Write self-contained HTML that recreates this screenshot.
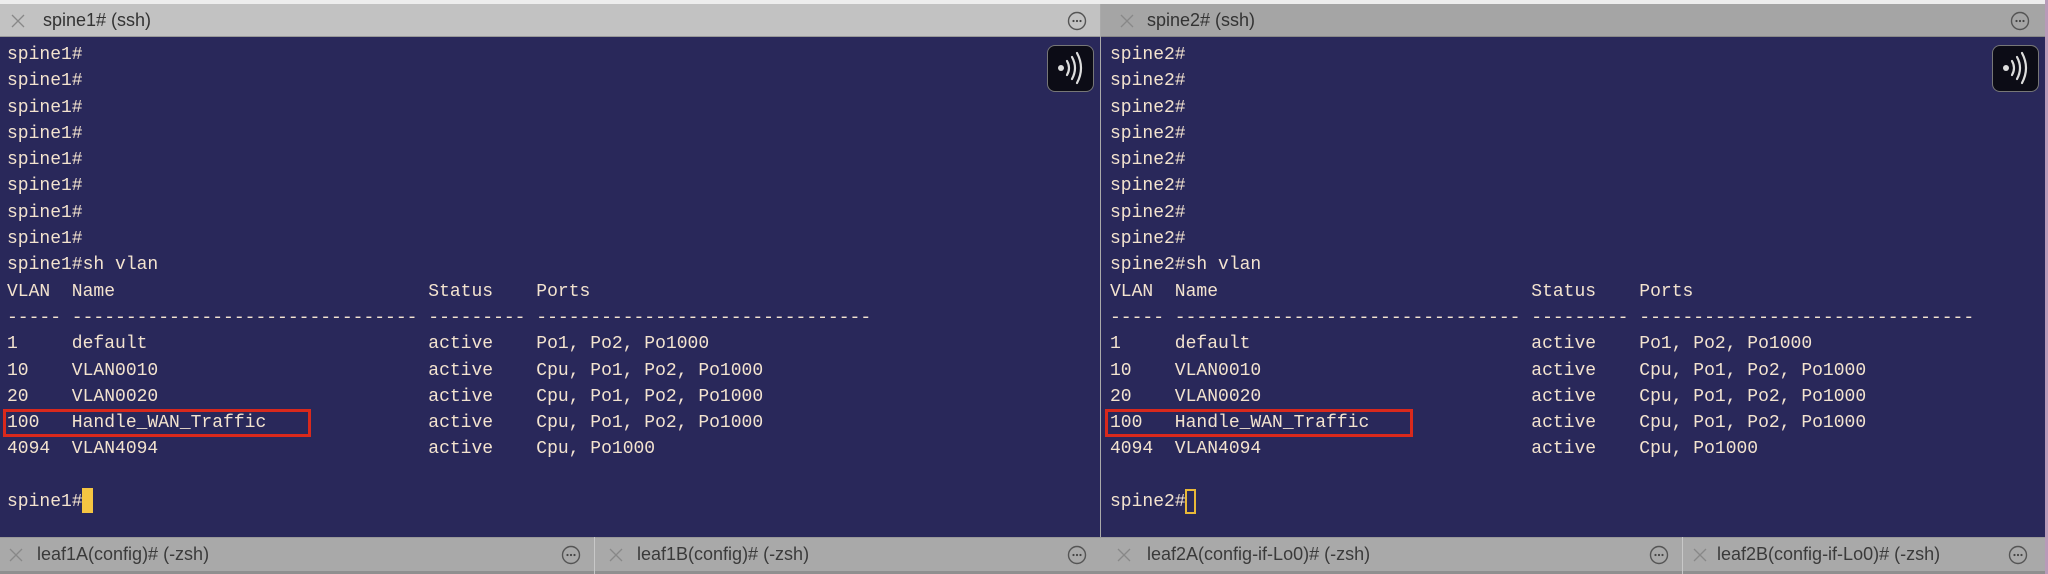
<!DOCTYPE html>
<html><head><meta charset="utf-8"><style>
*{margin:0;padding:0;box-sizing:border-box}
body{width:2048px;height:574px;overflow:hidden;background:#29285a;position:relative;font-family:"Liberation Sans",sans-serif}
.abs{position:absolute}
.term{position:absolute;top:42px;font-family:"Liberation Mono",monospace;font-size:18px;line-height:26.3px;color:#f3e3cf;white-space:pre}
.tab{position:absolute;height:33px;font-size:18px;color:#333;line-height:33px}
.x{position:absolute;width:16px;height:16px}
.dots{position:absolute;width:20px;height:20px}
.red{position:absolute;border:3px solid #d9291c;width:308px;height:28px;top:409px}
.ico{position:absolute;top:45px;width:47px;height:47px;background:#0c0c16;border:1.5px solid #777;border-radius:8px}
</style></head><body>
<svg width="0" height="0" style="position:absolute"><defs>
<symbol id="d" viewBox="0 0 20 20"><circle cx="10" cy="10" r="8.5" fill="none" stroke="#555" stroke-width="1.4"/><circle cx="6.5" cy="10" r="1.1" fill="#444"/><circle cx="10" cy="10" r="1.1" fill="#444"/><circle cx="13.5" cy="10" r="1.1" fill="#444"/></symbol>
<symbol id="c" viewBox="0 0 16 16"><path d="M2 2L14 14M14 2L2 14" stroke="#888" stroke-width="1.3"/></symbol>
</defs></svg>
<div class="abs" style="left:0;top:0;width:2048px;height:4px;background:#ededed"></div>
<div class="abs" style="left:0;top:4px;width:1100px;height:33px;background:#c2c2c2;border-bottom:1px solid #999"></div>
<div class="abs" style="left:1101px;top:4px;width:947px;height:33px;background:#a5a5a5;border-bottom:1px solid #888"></div>
<div class="abs" style="left:1100px;top:4px;width:1px;height:570px;background:#aaa"></div>
<div class="abs" style="left:2045px;top:0;width:3px;height:574px;background:#b89ab8"></div>

<svg class="x" style="left:10px;top:13px"><use href="#c"/></svg>
<div class="tab" style="left:43px;top:4px">spine1# (ssh)</div>
<svg class="dots" style="left:1067px;top:11px"><use href="#d"/></svg>
<svg class="x" style="left:1119px;top:13px"><use href="#c"/></svg>
<div class="tab" style="left:1147px;top:4px">spine2# (ssh)</div>
<svg class="dots" style="left:2010px;top:11px"><use href="#d"/></svg>

<div class="term" style="left:7px">spine1#
spine1#
spine1#
spine1#
spine1#
spine1#
spine1#
spine1#
spine1#sh vlan
VLAN  Name                             Status    Ports
----- -------------------------------- --------- -------------------------------
1     default                          active    Po1, Po2, Po1000
10    VLAN0010                         active    Cpu, Po1, Po2, Po1000
20    VLAN0020                         active    Cpu, Po1, Po2, Po1000
100   Handle_WAN_Traffic               active    Cpu, Po1, Po2, Po1000
4094  VLAN4094                         active    Cpu, Po1000

spine1#</div>
<div class="term" style="left:1110px">spine2#
spine2#
spine2#
spine2#
spine2#
spine2#
spine2#
spine2#
spine2#sh vlan
VLAN  Name                             Status    Ports
----- -------------------------------- --------- -------------------------------
1     default                          active    Po1, Po2, Po1000
10    VLAN0010                         active    Cpu, Po1, Po2, Po1000
20    VLAN0020                         active    Cpu, Po1, Po2, Po1000
100   Handle_WAN_Traffic               active    Cpu, Po1, Po2, Po1000
4094  VLAN4094                         active    Cpu, Po1000

spine2#</div>
<div class="red" style="left:3px"></div>
<div class="red" style="left:1105px"></div>
<div class="abs" style="left:82px;top:488px;width:11px;height:25px;background:#f5c542"></div>
<div class="abs" style="left:1185px;top:489px;width:11px;height:25px;border:2px solid #e8b838"></div>

<div class="ico" style="left:1047px"><svg width="44" height="44" viewBox="0 0 44 44"><circle cx="13" cy="22" r="3" fill="#ddd"/><g fill="none" stroke="#ddd" stroke-width="2.2" stroke-linecap="round"><path d="M19 15q4 7 0 14"/><path d="M24 11q6 11 0 22"/><path d="M29 7q8 15 0 30"/></g></svg></div>
<div class="ico" style="left:1992px"><svg width="44" height="44" viewBox="0 0 44 44"><circle cx="13" cy="22" r="3" fill="#ddd"/><g fill="none" stroke="#ddd" stroke-width="2.2" stroke-linecap="round"><path d="M19 15q4 7 0 14"/><path d="M24 11q6 11 0 22"/><path d="M29 7q8 15 0 30"/></g></svg></div>

<div class="abs" style="left:0;top:537px;width:2045px;height:34px;background:#a9a9a9;border-top:1px solid #999"></div>
<div class="abs" style="left:0;top:571px;width:2045px;height:3px;background:#8f8f8f"></div>
<div class="abs" style="left:594px;top:537px;width:1px;height:37px;background:#c8c8c8"></div>
<div class="abs" style="left:1682px;top:537px;width:1px;height:37px;background:#c8c8c8"></div>
<svg class="x" style="left:8px;top:547px"><use href="#c"/></svg>
<div class="tab" style="left:37px;top:538px;color:#3a3a3a">leaf1A(config)# (-zsh)</div>
<svg class="dots" style="left:561px;top:545px"><use href="#d"/></svg>
<svg class="x" style="left:608px;top:547px"><use href="#c"/></svg>
<div class="tab" style="left:637px;top:538px;color:#3a3a3a">leaf1B(config)# (-zsh)</div>
<svg class="dots" style="left:1067px;top:545px"><use href="#d"/></svg>
<svg class="x" style="left:1116px;top:547px"><use href="#c"/></svg>
<div class="tab" style="left:1147px;top:538px;color:#3a3a3a">leaf2A(config-if-Lo0)# (-zsh)</div>
<svg class="dots" style="left:1649px;top:545px"><use href="#d"/></svg>
<svg class="x" style="left:1692px;top:547px"><use href="#c"/></svg>
<div class="tab" style="left:1717px;top:538px;color:#3a3a3a">leaf2B(config-if-Lo0)# (-zsh)</div>
<svg class="dots" style="left:2008px;top:545px"><use href="#d"/></svg>
</body></html>
